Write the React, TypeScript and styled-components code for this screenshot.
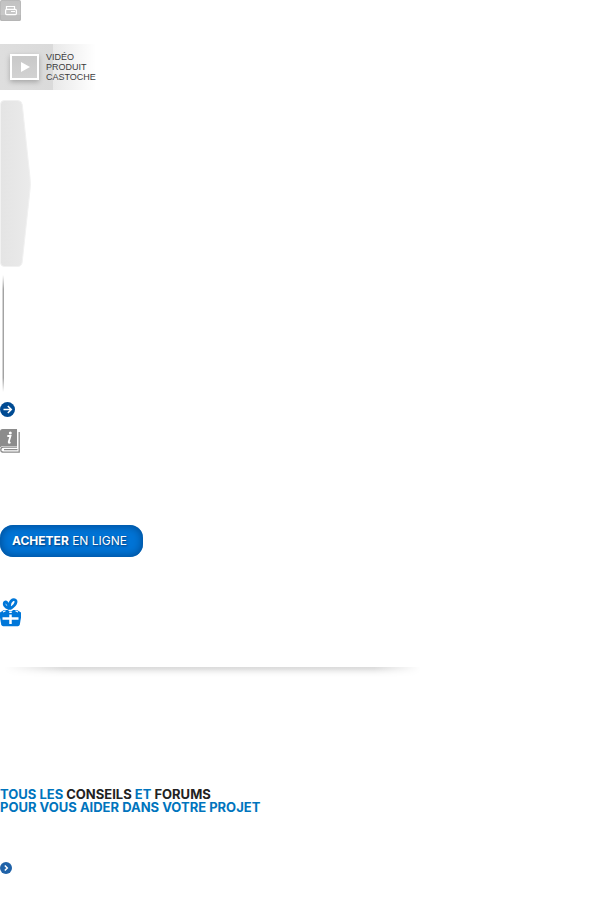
import React from "react";
import styled, { createGlobalStyle } from "styled-components";

const GlobalStyle = createGlobalStyle`
  * { box-sizing: border-box; }
  body { margin: 0; background: #fff; }
`;

const Page = styled.main`
  display: flex;
  flex-direction: column;
  align-items: flex-start;
  font-family: Inter, "Liberation Sans", sans-serif;
`;

const Slot = styled.div<{ $top?: number }>`
  margin-top: ${(p) => p.$top ?? 0}px;
  max-width: 100%;
  svg { display: block; }
`;

const IconButton = styled.button<{ $top?: number }>`
  margin: ${(p) => p.$top ?? 0}px 0 0;
  padding: 0;
  border: 0;
  background: none;
  cursor: pointer;
  svg { display: block; }
`;

const VideoButton = styled.button`
  display: flex;
  align-items: center;
  gap: 7px;
  height: 46px;
  margin: 23px 0 0;
  padding: 0 0 0 10px;
  border: 0;
  background: linear-gradient(90deg, #dedede 0, #dadada 53px, #e9e9e9 53px, #fff 96px);
  color: #3c3c3c;
  font: 9px/10px "Liberation Sans", Arial, sans-serif;
  text-align: left;
  cursor: pointer;
`;

const Thumb = styled.span`
  display: grid;
  place-items: center;
  width: 29px;
  height: 26px;
  border: 2px solid #fff;
  background: linear-gradient(#c9c9c9, #d2d2d2);
  box-shadow: 0 2px 5px rgba(0, 0, 0, 0.25);
`;

const VideoLabel = styled.span`
  display: flex;
  flex-direction: column;
`;

const VerticalRule = styled.div`
  width: 2px;
  height: 117px;
  margin: 8px 0 0 2px;
  background: linear-gradient(90deg, #d4d4d4 50%, #a3a3a3 50%);
  mask-image: linear-gradient(transparent, #000 12%, #000 88%, transparent);
`;

const BuyButton = styled.button`
  height: 32px;
  margin: 72px 0 0;
  padding: 0 16px 0 12px;
  border: 0;
  border-radius: 13px;
  background: #0074d6;
  box-shadow: inset 0 0 9px 1px #004c93;
  color: #fff;
  font: 400 12px/32px Inter, sans-serif;
  text-shadow: 1px 1px 2px rgba(0, 20, 60, 0.6);
  white-space: nowrap;
  cursor: pointer;

  b { font-weight: 700; }
`;

const Shadow = styled.div`
  width: 425px;
  max-width: 100%;
  height: 10px;
  margin-top: 40px;
  background: linear-gradient(#dbdbdb 0, #e0e0e0 2px, #eee 4px, #fafafa 7px, #fff 10px);
  mask-image: linear-gradient(90deg, transparent 1%, #000 15%, #000 88%, transparent 99%);
`;

const Heading = styled.h1`
  margin: 111px 0 0;
  color: #0074bd;
  font-size: 13px;
  font-weight: 700;
  line-height: 13px;
`;

const HeadingLine = styled.span`
  display: block;
`;

const Dark = styled.span`
  color: #222;
`;

export default function App() {
  return (
    <Page>
      <GlobalStyle />
      <Slot>
        <svg width="21" height="21" viewBox="0 0 21 21" aria-hidden="true">
          <defs>
            <linearGradient id="tile" x2="0" y2="1">
              <stop stopColor="#c2c2c2" />
              <stop offset="1" stopColor="#cbcbcb" />
            </linearGradient>
          </defs>
          <rect width="21" height="21" rx="2" fill="url(#tile)" />
          <path d="M0 15h21v4a2 2 0 0 1-2 2H2a2 2 0 0 1-2-2z" fill="#bdbdbd" />
          <path d="M.5 19V2Q.5.5 2 .5h17Q20.500.5 20.500 2v17q0 1.500-1.500 1.500H2Q.5 20.500.5 19z" fill="none" stroke="#aaa" strokeOpacity=".4" />
          <path d="M6.500 9.500V6.500h8v3" fill="none" stroke="#fff" strokeWidth="1.200" />
          <rect x="5.600" y="9.400" width="10.800" height="5.200" rx="1" fill="none" stroke="#fff" strokeWidth="1.200" />
          <path d="M11 11.500h4" stroke="#fff" />
        </svg>
      </Slot>

      <VideoButton type="button">
        <Thumb>
          <svg width="10" height="10" viewBox="0 0 10 10" aria-hidden="true">
            <path d="M1 0 10 5 1 10z" fill="#fff" />
          </svg>
        </Thumb>
        <VideoLabel>
          <span>VIDÉO</span>
          <span>PRODUIT</span>
          <span>CASTOCHE</span>
        </VideoLabel>
      </VideoButton>

      <Slot $top={10}>
        <svg width="31" height="167" viewBox="0 0 31 167" aria-hidden="true">
          <defs>
            <linearGradient id="panel">
              <stop stopColor="#e4e4e4" />
              <stop offset="1" stopColor="#ebebeb" />
            </linearGradient>
          </defs>
          <path d="M4.500.5h13q4 0 4.700 4L30 78q.9 6 0 12l-7.800 72q-.7 4.500-4.700 4.500h-13q-4 0-4-4V4.500q0-4 4-4z" fill="url(#panel)" stroke="#f1f1f1" />
        </svg>
      </Slot>

      <VerticalRule />

      <IconButton $top={10} type="button" aria-label="Suivant">
        <svg width="15" height="15" viewBox="0 0 15 15" aria-hidden="true">
          <circle cx="7.500" cy="7.500" r="7.500" fill="#004b93" />
          <path d="M3.500 7.500h7.500M7.800 4l3.500 3.500L7.800 11" fill="none" stroke="#fff" strokeWidth="1.500" />
        </svg>
      </IconButton>

      <Slot $top={12}>
        <svg width="20" height="24" viewBox="0 0 20 24" aria-hidden="true">
          <path d="M2.500 0H17v17H3Q1 17 0 18.500V2.500Q0 0 2.500 0z" fill="#8c8c8c" />
          <path d="M19.200 3v20.200H3.500Q.8 23.200.8 20.700T3.500 18.200H17M4 20.700h13.500" fill="none" stroke="#8c8c8c" strokeWidth="1.300" />
          <circle cx="10.300" cy="4" r="1.500" fill="#fff" />
          <path d="M7.300 7h3.200L8.700 13q-.2 1.400 1.800.3" fill="none" stroke="#fff" strokeWidth="1.800" />
        </svg>
      </Slot>

      <BuyButton type="button"><b>ACHETER</b> EN LIGNE</BuyButton>

      <Slot $top={41}>
        <svg width="21" height="29" viewBox="0 0 21 29" aria-hidden="true">
          <path d="M0 14.500 4 12h13l4 2.500v5l-1.200 7q-.4 1.800-2 1.800H3.200q-1.600 0-2-1.800L0 19.500z" fill="#0077d9" />
          <g fill="none" stroke="#0077d9" strokeWidth="2.800">
            <path d="M8.800 10.500Q3 8 4.400 4.700C5.500 2.500 8.500 5 9.300 10.500z" />
            <path d="M9.800 10.500Q8.500 4.500 12.500 1.900C17.500.7 17.500 6 10.500 10.500z" />
          </g>
          <path d="M3 14 5.500 12.800M18 14l-2.500-1.200M8.500 12.300h4" fill="none" stroke="#fff" strokeWidth="1.200" />
          <path d="M10.500 13.500v1.500M10.500 16.500v9.500M2.500 20.500h16" fill="none" stroke="#fff" strokeWidth="2.500" />
        </svg>
      </Slot>

      <Shadow />

      <Heading>
        <HeadingLine>TOUS LES <Dark>CONSEILS</Dark> ET <Dark>FORUMS</Dark></HeadingLine>
        <HeadingLine>POUR VOUS AIDER DANS VOTRE PROJET</HeadingLine>
      </Heading>

      <IconButton $top={48} type="button" aria-label="Voir">
        <svg width="12" height="12" viewBox="0 0 12 12" aria-hidden="true">
          <circle cx="6" cy="6" r="6" fill="#1f62a8" />
          <path d="M4.800 3.500 7.300 6 4.800 8.500" fill="none" stroke="#fff" strokeWidth="1.500" />
        </svg>
      </IconButton>
    </Page>
  );
}
